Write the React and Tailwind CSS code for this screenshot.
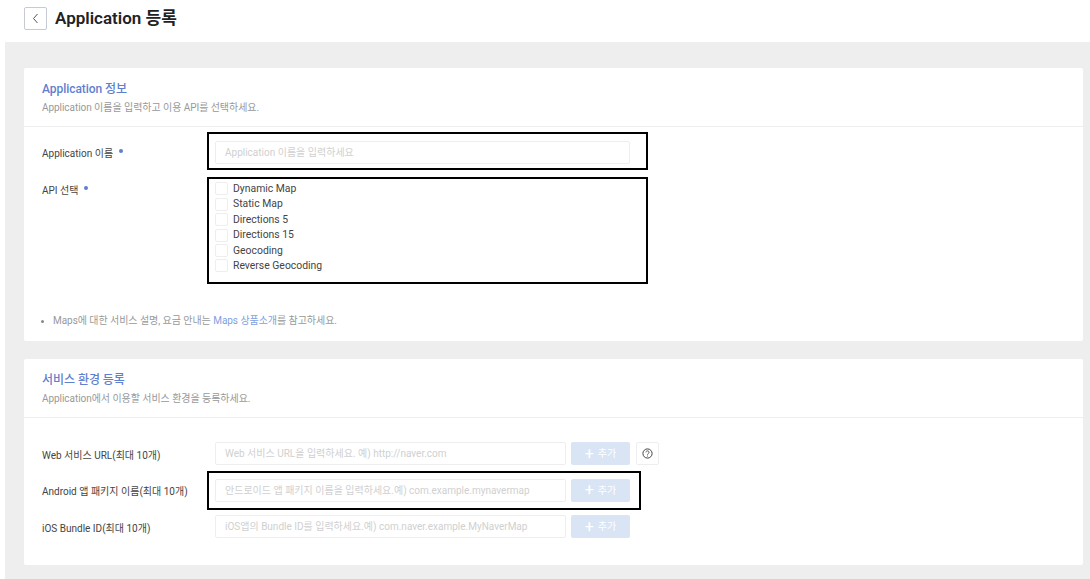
const font = "font-['Roboto','Noto_Sans_CJK_KR',sans-serif]";

const apis = ["Dynamic Map", "Static Map", "Directions 5", "Directions 15", "Geocoding", "Reverse Geocoding"];

function SectionHead({ title, desc }) {
  return (
    <div className="h-[59px] border-b border-[#eeeeee] pl-[18px] pt-[13px]">
      <h2 className="text-[12px] leading-[16px] font-medium tracking-[-0.05px] text-[#5f7fd0]">{title}</h2>
      <p className="mt-[4px] text-[10px] leading-[14px] tracking-[-0.05px] text-[#999999]">{desc}</p>
    </div>
  );
}

function Required({ children }) {
  return (
    <span className="flex text-[10px] leading-[14px] text-[#444444]">
      {children}
      <span className="ml-[6px] mt-[2px] size-[4px] rounded-full bg-[#5f7fd0]" />
    </span>
  );
}

function TextBox({ placeholder, className = "w-[351px]" }) {
  return (
    <input
      readOnly
      placeholder={placeholder}
      className={`h-[23px] rounded-[2px] border border-[#eeeeee] bg-white px-[9px] text-[10px] outline-none placeholder:text-[#d0d0d0] ${className}`}
    />
  );
}

function AddButton() {
  return (
    <button className="ml-[5px] flex h-[23px] w-[59px] items-center justify-center gap-[4px] rounded-[2px] bg-[#d9e5f4] text-[10px] text-white">
      <span className="text-[16px] leading-none">+</span>
      추가
    </button>
  );
}

function EnvRow({ label, placeholder, outlined, help }) {
  return (
    <div className="flex items-center">
      <span className="w-[173px] shrink-0 pt-[3px] text-[10px] text-[#444444]">{label}</span>
      {outlined ? (
        <div className="-mx-[8px] -my-[8px] flex h-[39px] w-[434px] items-center border-[2px] border-black pl-[6px]">
          <TextBox placeholder={placeholder} />
          <AddButton />
        </div>
      ) : (
        <>
          <TextBox placeholder={placeholder} />
          <AddButton />
        </>
      )}
      {help && (
        <div className="ml-[6px] flex size-[23px] items-center justify-center rounded-[2px] border border-[#eeeeee]">
          <svg width="11" height="11" viewBox="0 0 11 11" fill="none" stroke="#444444">
            <circle cx="5.5" cy="5.5" r="4.6" strokeWidth="1" />
            <path d="M4 4.3a1.5 1.5 0 1 1 2.3 1.3c-.5.3-.8.6-.8 1.1" strokeWidth="0.9" />
            <path d="M5.5 7.6v.9" strokeWidth="0.9" />
          </svg>
        </div>
      )}
    </div>
  );
}

export default function App() {
  return (
    <div className={`h-[579px] w-[1090px] overflow-hidden bg-white ${font}`}>
      <header className="flex h-[42px] items-center pb-[5px] pl-[24px]">
        <button className="flex h-[23px] w-[23px] items-center justify-center rounded-[2px] border border-[#c5cad3]">
          <svg width="7" height="11" viewBox="0 0 7 11" fill="none" stroke="#555555" strokeWidth="1">
            <path d="M5.5 1 1.5 5.5l4 4.5" />
          </svg>
        </button>
        <h1 className="ml-[8px] text-[17px] font-semibold text-[#222222]">Application 등록</h1>
      </header>

      <main className="ml-[5px] h-[537px] bg-[#eeeeee] pl-[19px] pr-[7px] pt-[26px]">
        <section className="h-[273px] rounded-[2px] bg-white">
          <SectionHead title="Application 정보" desc="Application 이름을 입력하고 이용 API를 선택하세요." />
          <div className="flex pl-[18px] pt-[5px]">
            <div className="w-[165px] shrink-0">
              <div className="flex h-[38px] items-center pt-[5px]"><Required>Application 이름</Required></div>
              <div className="mt-[14px]"><Required>API 선택</Required></div>
            </div>
            <div>
              <div className="flex h-[38px] w-[441px] items-center border-[2px] border-black pl-[6px] pt-[2px]">
                <TextBox placeholder="Application 이름을 입력하세요" className="w-[415px]" />
              </div>
              <div className="mt-[7px] h-[107px] w-[441px] border-[2px] border-black pl-[6px] pt-[2px]">
                {apis.map((api) => (
                  <label key={api} className="flex h-[15.45px] items-center text-[10.4px] text-[#444444]">
                    <span className="size-[13px] rounded-[2px] border border-[#eeeeee]" />
                    <span className="ml-[5px]">{api}</span>
                  </label>
                ))}
              </div>
            </div>
          </div>
          <p className="mt-[30px] flex items-center pl-[17px] text-[10px] leading-[14px] tracking-[-0.05px] text-[#999999]">
            <span className="mr-[9px] size-[3px] rounded-full bg-[#888888]" />
            Maps에 대한 서비스 설명, 요금 안내는&nbsp;
            <span className="text-[#7f9fe0]">Maps 상품소개</span>를 참고하세요.
          </p>
        </section>

        <section className="mt-[18px] h-[206px] rounded-[2px] bg-white">
          <SectionHead title="서비스 환경 등록" desc="Application에서 이용할 서비스 환경을 등록하세요." />
          <div className="flex flex-col gap-[13.5px] pl-[18px] pt-[24px]">
            <EnvRow label="Web 서비스 URL(최대 10개)" placeholder="Web 서비스 URL을 입력하세요. 예) http://naver.com" help />
            <EnvRow label="Android 앱 패키지 이름(최대 10개)" placeholder="안드로이드 앱 패키지 이름을 입력하세요.예) com.example.mynavermap" outlined />
            <EnvRow label="iOS Bundle ID(최대 10개)" placeholder="iOS앱의 Bundle ID를 입력하세요.예) com.naver.example.MyNaverMap" />
          </div>
        </section>
      </main>
    </div>
  );
}
